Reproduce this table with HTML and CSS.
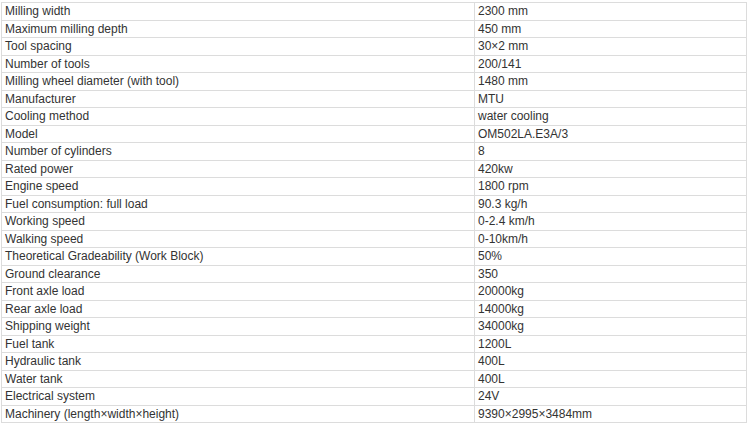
FILE: index.html
```html
<!DOCTYPE html>
<html>
<head>
<meta charset="utf-8">
<link rel="stylesheet" href="styles.css">
</head>
<body>
<table class="spec">
<tr><td class="k">Milling width</td><td>2300 mm</td></tr>
<tr><td class="k">Maximum milling depth</td><td>450 mm</td></tr>
<tr><td class="k">Tool spacing</td><td>30×2 mm</td></tr>
<tr><td class="k">Number of tools</td><td>200/141</td></tr>
<tr><td class="k">Milling wheel diameter (with tool)</td><td>1480 mm</td></tr>
<tr><td class="k">Manufacturer</td><td>MTU</td></tr>
<tr><td class="k">Cooling method</td><td>water cooling</td></tr>
<tr><td class="k">Model</td><td>OM502LA.E3A/3</td></tr>
<tr><td class="k">Number of cylinders</td><td>8</td></tr>
<tr><td class="k">Rated power</td><td>420kw</td></tr>
<tr><td class="k">Engine speed</td><td>1800 rpm</td></tr>
<tr><td class="k">Fuel consumption: full load</td><td>90.3 kg/h</td></tr>
<tr><td class="k">Working speed</td><td>0-2.4 km/h</td></tr>
<tr><td class="k">Walking speed</td><td>0-10km/h</td></tr>
<tr><td class="k">Theoretical Gradeability (Work Block)</td><td>50%</td></tr>
<tr><td class="k">Ground clearance</td><td>350</td></tr>
<tr><td class="k">Front axle load</td><td>20000kg</td></tr>
<tr><td class="k">Rear axle load</td><td>14000kg</td></tr>
<tr><td class="k">Shipping weight</td><td>34000kg</td></tr>
<tr><td class="k">Fuel tank</td><td>1200L</td></tr>
<tr><td class="k">Hydraulic tank</td><td>400L</td></tr>
<tr><td class="k">Water tank</td><td>400L</td></tr>
<tr><td class="k">Electrical system</td><td>24V</td></tr>
<tr><td class="k">Machinery (length×width×height)</td><td>9390×2995×3484mm</td></tr>
</table>
</body>
</html>
```
FILE: styles.css
```css
html, body {
  margin: 0;
  background: #fff;
}
body {
  padding: 2px 0 0 1px;
}
.spec {
  border-collapse: collapse;
  width: 746px;
  table-layout: fixed;
  font-family: "Liberation Sans", Arial, sans-serif;
  font-size: 12px;
  color: #333;
}
.spec td {
  border: 1px solid #dcdcdc;
  height: 17.5px;
  padding: 0 3px;
  box-sizing: border-box;
  vertical-align: middle;
  line-height: 14px;
  white-space: nowrap;
}
.spec td.k {
  width: 473px;
}
```
